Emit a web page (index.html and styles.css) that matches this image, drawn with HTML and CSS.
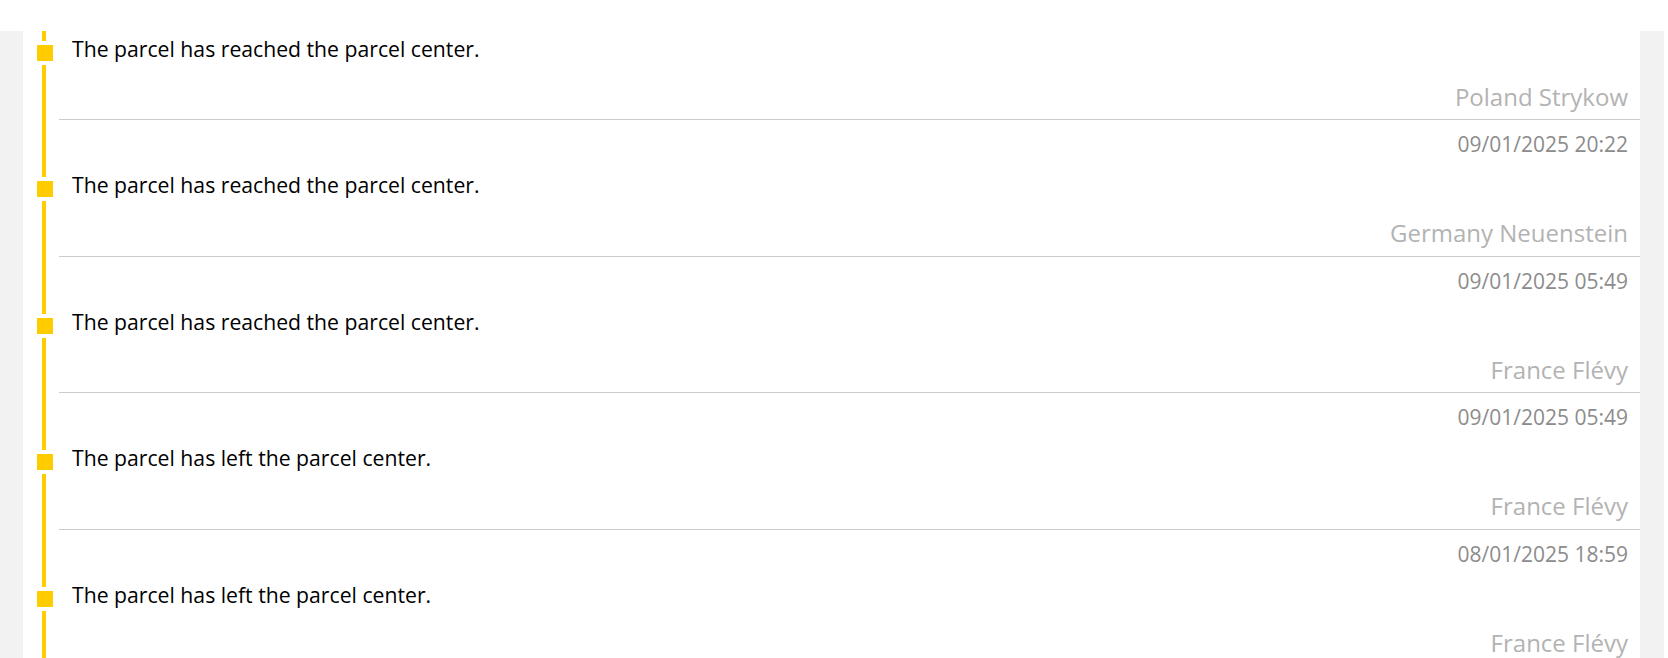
FILE: index.html
```html
<!DOCTYPE html>
<html lang="en">
<head>
<meta charset="utf-8">
<title>Shipment history</title>
<link rel="stylesheet" href="styles.css">
</head>
<body>
<div class="frame">
  <div class="card">
    <ol class="timeline">
      <li class="event event--clipped">
        <div class="rail"><span class="rail-top"></span><span class="rail-dot"></span><span class="rail-bottom"></span></div>
        <div class="body">
          <div class="desc">The parcel has reached the parcel center.</div>
          <div class="loc">Poland Strykow</div>
        </div>
      </li>
      <li class="event">
        <div class="rail"><span class="rail-top"></span><span class="rail-dot"></span><span class="rail-bottom"></span></div>
        <div class="body">
          <div class="date">09/01/2025 20:22</div>
          <div class="desc">The parcel has reached the parcel center.</div>
          <div class="loc">Germany Neuenstein</div>
        </div>
      </li>
      <li class="event">
        <div class="rail"><span class="rail-top"></span><span class="rail-dot"></span><span class="rail-bottom"></span></div>
        <div class="body">
          <div class="date">09/01/2025 05:49</div>
          <div class="desc">The parcel has reached the parcel center.</div>
          <div class="loc">France Flévy</div>
        </div>
      </li>
      <li class="event">
        <div class="rail"><span class="rail-top"></span><span class="rail-dot"></span><span class="rail-bottom"></span></div>
        <div class="body">
          <div class="date">09/01/2025 05:49</div>
          <div class="desc">The parcel has left the parcel center.</div>
          <div class="loc">France Flévy</div>
        </div>
      </li>
      <li class="event">
        <div class="rail"><span class="rail-top"></span><span class="rail-dot"></span><span class="rail-bottom"></span></div>
        <div class="body">
          <div class="date">08/01/2025 18:59</div>
          <div class="desc">The parcel has left the parcel center.</div>
          <div class="loc">France Flévy</div>
        </div>
      </li>
    </ol>
  </div>
</div>
</body>
</html>
```
FILE: styles.css
```css
html, body {
  margin: 0;
  background: #ffffff;
}
html {
  overflow: hidden;
}
body {
  font-family: "Open Sans", "Noto Sans", sans-serif;
}
.frame {
  margin: 31px 4px 0 0;
  padding: 0 24px 0 23px;
  background: #f2f2f2;
}
.card {
  background: #ffffff;
}
.timeline {
  list-style: none;
  margin: 0;
  padding: 0;
}
.event {
  display: flex;
}
.rail {
  flex: none;
  width: 36px;
  display: flex;
  flex-direction: column;
  gap: 4px;
}
.rail-top,
.rail-bottom {
  width: 4px;
  margin-left: 19px;
  background: #ffcc00;
}
.rail-top {
  height: 57px;
  flex: none;
}
.rail-bottom {
  flex: 1;
}
.rail-dot {
  flex: none;
  width: 16px;
  height: 16px;
  margin-left: 14px;
  background: #ffcc00;
}
.event--clipped .rail-top {
  height: 10px;
}
.body {
  flex: 1;
  min-width: 0;
  padding: 12px 12px 8.5px 13px;
  border-bottom: 1px solid #cccccc;
}
.event--clipped .body {
  padding-top: 6px;
  padding-bottom: 8px;
}
.date {
  text-align: right;
  font-size: 21px;
  line-height: 24px;
  color: #8c8c8c;
}
.desc {
  margin-top: 17px;
  font-size: 21.2px;
  line-height: 24px;
  color: #000000;
}
.event--clipped .desc {
  margin-top: 0;
}
.loc {
  margin-top: 22px;
  text-align: right;
  font-size: 24px;
  line-height: 28px;
  color: #b3b3b3;
}
```
